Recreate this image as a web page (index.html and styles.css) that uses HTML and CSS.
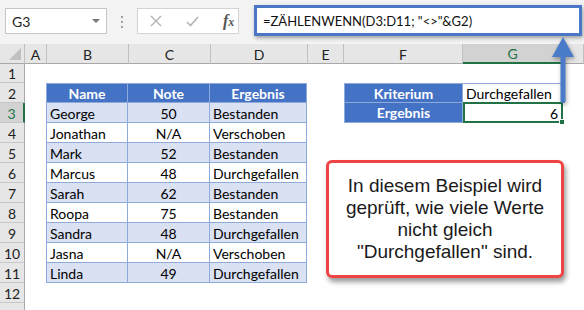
FILE: index.html
```html
<!DOCTYPE html>
<html>
<head>
<meta charset="utf-8">
<link rel="stylesheet" href="styles.css">
</head>
<body>
<div class="top">
  <div class="namebox"><span>G3</span><span class="dd"></span></div>
  <div class="dots"><i></i><i></i><i></i></div>
  <div class="fxbox">
    <svg class="ico x" width="12" height="12" viewBox="0 0 12 12"><path d="M1 1 L11 11 M11 1 L1 11" stroke="#b4b4b4" stroke-width="1.4" fill="none"/></svg>
    <svg class="ico chk" width="13" height="11" viewBox="0 0 13 11"><path d="M1 6 L4.5 9.5 L12 1" stroke="#b4b4b4" stroke-width="1.6" fill="none"/></svg>
    <span class="fx">f<small>x</small></span>
  </div>
  <div class="formula">=ZÄHLENWENN(D3:D11; "&lt;&gt;"&amp;G2)</div>
</div>
<div class="sheet">
  <div class="colheads">
    <div class="ch corner"><span class="tri"></span></div>
    <div class="ch">A</div>
    <div class="ch">B</div>
    <div class="ch">C</div>
    <div class="ch">D</div>
    <div class="ch">E</div>
    <div class="ch">F</div>
    <div class="ch sel">G</div>
    <div class="ch"></div>
  </div>
  <div class="body">
    <div class="rowheads">
      <div class="rh">1</div>
      <div class="rh">2</div>
      <div class="rh sel">3</div>
      <div class="rh">4</div>
      <div class="rh">5</div>
      <div class="rh">6</div>
      <div class="rh">7</div>
      <div class="rh">8</div>
      <div class="rh">9</div>
      <div class="rh">10</div>
      <div class="rh">11</div>
      <div class="rh">12</div>
      <div class="rh"></div>
    </div>
    <div class="cells">
      <div class="tmain">
        <div class="hd">Name</div><div class="hd">Note</div><div class="hd">Ergebnis</div>
        <div class="c s">George</div><div class="c s n">50</div><div class="c s">Bestanden</div>
        <div class="c">Jonathan</div><div class="c n">N/A</div><div class="c">Verschoben</div>
        <div class="c s">Mark</div><div class="c s n">52</div><div class="c s">Bestanden</div>
        <div class="c">Marcus</div><div class="c n">48</div><div class="c">Durchgefallen</div>
        <div class="c s">Sarah</div><div class="c s n">62</div><div class="c s">Bestanden</div>
        <div class="c">Roopa</div><div class="c n">75</div><div class="c">Bestanden</div>
        <div class="c s">Sandra</div><div class="c s n">48</div><div class="c s">Durchgefallen</div>
        <div class="c">Jasna</div><div class="c n">N/A</div><div class="c">Verschoben</div>
        <div class="c s">Linda</div><div class="c s n">49</div><div class="c s">Durchgefallen</div>
      </div>
      <div class="tcrit">
        <div class="hd">Kriterium</div><div class="c crit">Durchgefallen</div>
        <div class="hd">Ergebnis</div><div class="c res">6<span class="handle"></span></div>
      </div>
    </div>
  </div>
</div>
<svg class="arrow" width="30" height="74" viewBox="0 0 30 74">
  <polygon points="13,2 2,22 24,22" fill="#4a7bc8"/>
  <rect x="10.5" y="20" width="5" height="48" rx="2" fill="#4a7bc8"/>
</svg>
<div class="callout">In diesem Beispiel wird geprüft, wie viele Werte nicht gleich "Durchgefallen" sind.</div>
</body>
</html>
```

FILE: styles.css
```css
* { box-sizing: border-box; }
html, body { margin: 0; padding: 0; }
body {
  width: 584px;
  height: 310px;
  overflow: hidden;
  background: #fff;
  position: relative;
  font-family: Lato, "Liberation Sans", sans-serif;
}
.top {
  height: 44px;
  background: #f3f3f3;
  display: flex;
  align-items: flex-start;
  padding-left: 5px;
}
.namebox {
  margin-top: 8px;
  width: 102px;
  height: 26px;
  background: #fff;
  border: 1px solid #c6c6c6;
  display: flex;
  align-items: center;
  justify-content: space-between;
  padding: 0 6px 0 6px;
  font-size: 14px;
  color: #222;
}
.dd {
  width: 0; height: 0;
  border-left: 4px solid transparent;
  border-right: 4px solid transparent;
  border-top: 4px solid #777;
}
.dots {
  width: 30px;
  height: 44px;
  display: flex;
  flex-direction: column;
  align-items: center;
  justify-content: center;
  gap: 3px;
}
.dots i {
  display: block;
  width: 2px; height: 2px;
  background: #a0a0a0;
}
.fxbox {
  margin-top: 8px;
  width: 102px;
  height: 26px;
  background: #fff;
  border: 1px solid #d4d4d4;
  display: flex;
  align-items: center;
  padding-left: 12px;
}
.ico { display: block; flex: none; }
.ico.x { margin-right: 24px; }
.ico.chk { margin-right: 24px; }
.fxbox .fx { color: #555; font-style: italic; font-family: "Liberation Serif", serif; font-size: 16px; font-weight: bold; }
.fxbox .fx small { font-size: 12px; }
.formula {
  margin-left: 15px;
  margin-top: 5px;
  width: 328px;
  height: 31px;
  background: #fff;
  border: 3px solid #4a78c6;
  box-shadow: 1px 2px 4px rgba(0,0,0,0.35);
  display: flex;
  align-items: center;
  padding-left: 6px;
  font-size: 13px;
  color: #111;
  white-space: nowrap;
}
.sheet { display: flex; flex-direction: column; }
.colheads {
  display: grid;
  grid-template-columns: 25px 22px 82px 82px 97px 36px 119px 100px 1fr;
  height: 19px;
}
.ch {
  background: #e6e6e6;
  border-right: 1px solid #c0c0c0;
  border-bottom: 1px solid #a8a8a8;
  font-size: 14px;
  color: #222;
  display: flex;
  align-items: center;
  justify-content: center;
  padding-top: 1px;
}
.ch.sel {
  background: #d2d2d2;
  border-bottom: 2px solid #217346;
  color: #217346;
}
.corner { position: relative; }
.tri {
  position: absolute;
  right: 3px; bottom: 3px;
  width: 0; height: 0;
  border-left: 12px solid transparent;
  border-bottom: 12px solid #c0c0c0;
}
.body { display: flex; }
.rowheads { width: 25px; display: flex; flex-direction: column; }
.rh {
  height: 20px;
  background: #e6e6e6;
  border-right: 1px solid #a8a8a8;
  border-bottom: 1px solid #c8c8c8;
  font-size: 14px;
  color: #222;
  display: flex;
  align-items: center;
  justify-content: center;
  padding-top: 1px;
}
.rh.sel {
  background: #d2d2d2;
  border-right: 2px solid #217346;
  color: #217346;
}
.cells {
  flex: 1;
  display: grid;
  grid-template-columns: 22px 82px 82px 97px 36px 119px 100px 1fr;
  grid-template-rows: repeat(13, 20px);
}
.tmain {
  grid-column: 2 / 5;
  grid-row: 2 / 12;
  display: grid;
  grid-template-columns: 82px 82px 97px;
  grid-template-rows: repeat(10, 20px);
  margin-left: -1px;
}
.hd {
  background: #4472c4;
  color: #fff;
  font-weight: bold;
  font-size: 14px;
  display: flex;
  align-items: center;
  justify-content: center;
  border-right: 1px solid #8eaadb;
  border-bottom: 1px solid #8eaadb;
  border-top: 1px solid #8eaadb;
}
.tmain .hd:first-child { border-left: 1px solid #8eaadb; }
.c {
  font-size: 14px;
  color: #000;
  display: flex;
  align-items: center;
  padding-left: 3px;
  padding-top: 1px;
  border-right: 1px solid #8eaadb;
  border-bottom: 1px solid #8eaadb;
  white-space: nowrap;
}
.tmain .c:nth-child(3n+1) { border-left: 1px solid #8eaadb; }
.c.s { background: #d9e1f2; }
.c.n { justify-content: center; padding-left: 0; }
.tcrit {
  grid-column: 6 / 8;
  grid-row: 2 / 4;
  display: grid;
  grid-template-columns: 119px 100px;
  grid-template-rows: 20px 20px;
}
.tcrit .hd { border-left: 1px solid #8eaadb; }
.tcrit .hd:nth-child(3) { border-top: none; }
.crit { border-top: 1px solid #8eaadb; }
.res {
  position: relative;
  justify-content: flex-end;
  padding-right: 3px;
  border: 2px solid #217346;
  margin-top: -1px;
  height: 21px;
}
.handle {
  position: absolute;
  right: -4px;
  bottom: -4px;
  width: 6px;
  height: 6px;
  background: #217346;
  border: 1px solid #fff;
}
.arrow {
  position: absolute;
  left: 550px;
  top: 35px;
  filter: drop-shadow(1px 2px 2px rgba(0,0,0,0.35));
}
.callout {
  position: absolute;
  left: 326px;
  top: 160px;
  width: 238px;
  height: 118px;
  border: 3px solid #f04343;
  border-radius: 6px;
  background: #fff;
  box-shadow: 2px 4px 5px rgba(0,0,0,0.4);
  font-family: "Liberation Sans", Arial, sans-serif;
  font-size: 19px;
  line-height: 22px;
  color: #1a1a1a;
  text-align: center;
  padding: 12px 14px 0 14px;
}
```
